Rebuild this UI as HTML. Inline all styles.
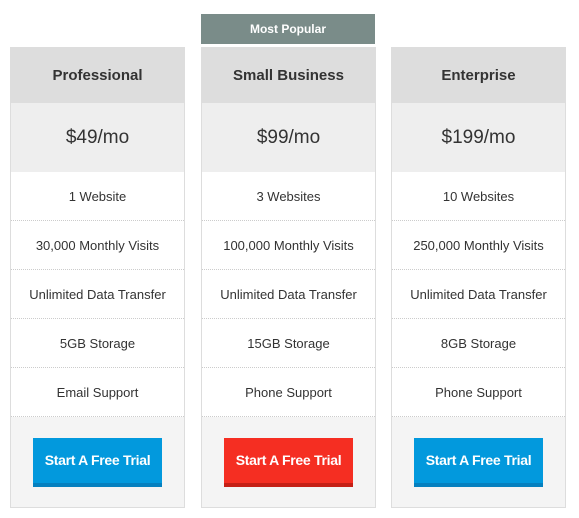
<!DOCTYPE html>
<html><head><style>
body{margin:0;background:#fff;font-family:"Liberation Sans",sans-serif;width:579px;height:518px;position:relative;overflow:hidden}
.pop{position:absolute;left:201px;top:14px;width:174px;height:30px;background:#7a8c89;color:#fff;font-weight:bold;font-size:12px;text-align:center;line-height:30px}
.col{position:absolute;top:47px;width:173px;border:1px solid #ddd;box-sizing:content-box}
.h{height:55px;background:#ddd;font-weight:bold;font-size:15px;color:#333;text-align:center;line-height:56px}
.p{height:69px;background:#eee;font-size:19px;color:#333;text-align:center;line-height:70px}
.r{height:48px;border-bottom:1px dotted #ccc;font-size:13px;color:#333;text-align:center;line-height:49px;background:#fff}
.f{height:90px;background:#f4f4f4;position:relative}
.b{position:absolute;left:22px;top:21px;width:129px;height:45px;border-bottom:4px solid #0580bf;background:#0299dd;color:#fff;font-weight:bold;font-size:14px;text-align:center;line-height:45px;letter-spacing:-0.3px}
.b.red{background:#f52e22;border-bottom-color:#c51f15}
</style></head><body>
<div class="pop">Most Popular</div>
<div class="col" style="left:10px"><div class="h">Professional</div><div class="p">$49/mo</div>
<div class="r">1 Website</div><div class="r">30,000 Monthly Visits</div><div class="r">Unlimited Data Transfer</div><div class="r">5GB Storage</div><div class="r">Email Support</div>
<div class="f"><div class="b">Start A Free Trial</div></div></div>
<div class="col" style="left:201px"><div class="h">Small Business</div><div class="p">$99/mo</div>
<div class="r">3 Websites</div><div class="r">100,000 Monthly Visits</div><div class="r">Unlimited Data Transfer</div><div class="r">15GB Storage</div><div class="r">Phone Support</div>
<div class="f"><div class="b red">Start A Free Trial</div></div></div>
<div class="col" style="left:391px"><div class="h">Enterprise</div><div class="p">$199/mo</div>
<div class="r">10 Websites</div><div class="r">250,000 Monthly Visits</div><div class="r">Unlimited Data Transfer</div><div class="r">8GB Storage</div><div class="r">Phone Support</div>
<div class="f"><div class="b">Start A Free Trial</div></div></div>
</body></html>
